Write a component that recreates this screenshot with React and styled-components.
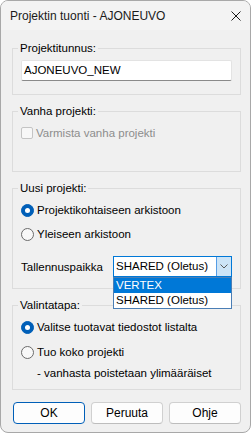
import React from "react";
import styled, { createGlobalStyle } from "styled-components";

const GlobalStyle = createGlobalStyle`
  html, body {
    margin: 0;
    padding: 0;
    background: #ffffff;
  }
  body {
    font-family: "Liberation Sans", Arial, sans-serif;
    font-size: 11.5px;
    color: #000000;
  }
  * {
    box-sizing: border-box;
  }
`;

const Window = styled.div`
  width: 251px;
  height: 433px;
  border: 1px solid #a8a8a8;
  border-radius: 8px;
  background: #f0f0f0;
  overflow: hidden;
  display: flex;
  flex-direction: column;
`;

const TitleBar = styled.div`
  height: 29px;
  flex-shrink: 0;
  display: flex;
  align-items: center;
  padding: 0 9px 0 9px;
  background: #f3f3f3;
  font-size: 12px;
  color: #1a1a1a;
`;

const CloseIcon = styled.svg`
  margin-left: auto;
  width: 10px;
  height: 10px;
`;

const Body = styled.div`
  display: flex;
  flex-direction: column;
  gap: 8px;
  padding: 10px 9px 0 11px;
`;

const GroupBox = styled.fieldset`
  margin: 0;
  border: 1px solid #dcdcdc;
  padding: ${(p) => p.$pad};
  min-width: 0;
`;

const Legend = styled.legend`
  padding: 0 2px;
  margin-left: -3px;
  line-height: 16px;
  height: 16px;
`;

const TextInput = styled.div`
  height: 21px;
  background: #ffffff;
  border: 1px solid #e3e3e3;
  border-bottom-color: #8a8a8a;
  border-radius: 2px;
  padding: 0 2px;
  line-height: 19px;
`;

const Option = styled.div`
  display: flex;
  align-items: center;
  gap: 2px;
  height: 16px;
  margin-top: ${(p) => p.$mt || 0}px;
  padding-left: ${(p) => p.$indent || 0}px;
  color: ${(p) => (p.$disabled ? "#8d8d8d" : "#000000")};
`;

const Radio = styled.span`
  position: relative;
  width: 13px;
  height: 13px;
  border-radius: 50%;
  flex-shrink: 0;
  margin-right: 1px;
  background: ${(p) => (p.$checked ? "#005fb8" : "#f8f8f8")};
  border: 1px solid ${(p) => (p.$checked ? "#005fb8" : "#6b6b6b")};
  &::after {
    content: "";
    display: ${(p) => (p.$checked ? "block" : "none")};
    position: absolute;
    left: 3px;
    top: 3px;
    width: 5px;
    height: 5px;
    border-radius: 50%;
    background: #ffffff;
  }
`;

const Checkbox = styled.span`
  width: 12px;
  height: 12px;
  flex-shrink: 0;
  margin-right: 1px;
  border: 1px solid #c4c4c4;
  border-radius: 2px;
  background: #f7f7f7;
`;

const FieldRow = styled.div`
  display: flex;
  align-items: center;
  height: 21px;
  margin-top: 14px;
`;

const Combo = styled.div`
  position: relative;
  margin-left: auto;
  width: 119px;
  height: 21px;
  display: flex;
  background: #ffffff;
  border: 1px solid #0078d7;
`;

const ComboValue = styled.div`
  flex: 1;
  padding-left: 2px;
  line-height: 19px;
`;

const ComboButton = styled.div`
  width: 15px;
  display: flex;
  align-items: center;
  justify-content: center;
  background: #cce4f7;
  border-left: 1px solid #569de5;
`;

const DropList = styled.div`
  position: absolute;
  left: -1px;
  right: -1px;
  top: 100%;
  margin-top: 1px;
  border: 1px solid #4a7eb5;
  background: #ffffff;
  z-index: 2;
`;

const ListItem = styled.div`
  height: 15px;
  line-height: 15px;
  padding-left: 2px;
  background: ${(p) => (p.$active ? "#0078d7" : "#ffffff")};
  color: ${(p) => (p.$active ? "#ffffff" : "#000000")};
`;

const ButtonRow = styled.div`
  display: grid;
  grid-template-columns: repeat(3, 1fr);
  gap: 6px;
  margin-top: 4px;
  padding-left: 1px;
`;

const Button = styled.div`
  height: 22px;
  display: flex;
  align-items: center;
  justify-content: center;
  background: #fdfdfd;
  border: 1px solid ${(p) => (p.$primary ? "#005fb8" : "#d0d0d0")};
  border-bottom-color: ${(p) => (p.$primary ? "#005fb8" : "#bdbdbd")};
  border-radius: 4px;
  font-size: 12px;
`;

export default function App() {
  return (
    <>
      <GlobalStyle />
      <Window>
        <TitleBar>
          <span>Projektin tuonti - AJONEUVO</span>
          <CloseIcon viewBox="0 0 10 10">
            <path d="M0.5 0.5 L9.5 9.5 M9.5 0.5 L0.5 9.5" stroke="#1a1a1a" strokeWidth="1" fill="none" />
          </CloseIcon>
        </TitleBar>
        <Body>
          <GroupBox $pad="4px 8px 13px">
            <Legend>Projektitunnus:</Legend>
            <TextInput>AJONEUVO_NEW</TextInput>
          </GroupBox>

          <GroupBox $pad="6px 8px 30px">
            <Legend>Vanha projekti:</Legend>
            <Option $disabled>
              <Checkbox />
              Varmista vanha projekti
            </Option>
          </GroupBox>

          <GroupBox $pad="6px 8px 11px">
            <Legend>Uusi projekti:</Legend>
            <Option>
              <Radio $checked />
              Projektikohtaiseen arkistoon
            </Option>
            <Option $mt={8}>
              <Radio />
              Yleiseen arkistoon
            </Option>
            <FieldRow>
              <span>Tallennuspaikka</span>
              <Combo>
                <ComboValue>SHARED (Oletus)</ComboValue>
                <ComboButton>
                  <svg width="8" height="5" viewBox="0 0 8 5">
                    <path d="M0.5 0.5 L4 4 L7.5 0.5" stroke="#5a5a5a" strokeWidth="1" fill="none" />
                  </svg>
                </ComboButton>
                <DropList>
                  <ListItem $active>VERTEX</ListItem>
                  <ListItem>SHARED (Oletus)</ListItem>
                </DropList>
              </Combo>
            </FieldRow>
          </GroupBox>

          <GroupBox $pad="6px 8px 8px">
            <Legend>Valintatapa:</Legend>
            <Option>
              <Radio $checked />
              Valitse tuotavat tiedostot listalta
            </Option>
            <Option $mt={9}>
              <Radio />
              Tuo koko projekti
            </Option>
            <Option $mt={5} $indent={16}>
              - vanhasta poistetaan ylimääräiset
            </Option>
          </GroupBox>

          <ButtonRow>
            <Button $primary>OK</Button>
            <Button>Peruuta</Button>
            <Button>Ohje</Button>
          </ButtonRow>
        </Body>
      </Window>
    </>
  );
}
